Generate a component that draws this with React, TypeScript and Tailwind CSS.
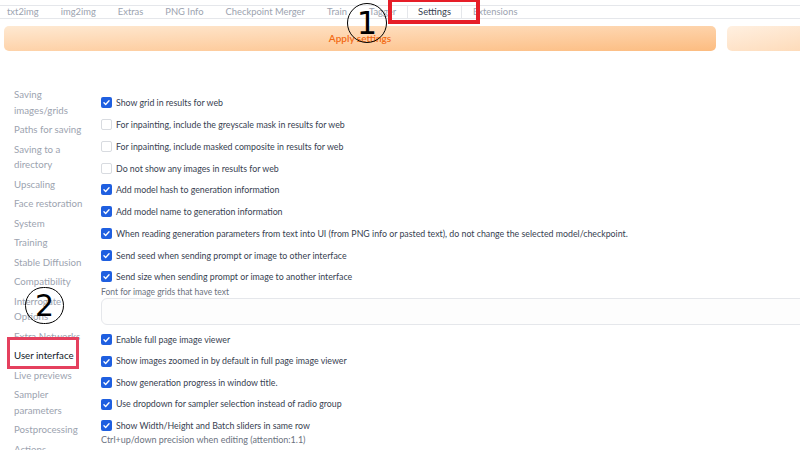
import React from "react";

const tabs = ["txt2img", "img2img", "Extras", "PNG Info", "Checkpoint Merger", "Train", "Tagger", "Settings", "Extensions"];

const side: { t: string; active?: boolean }[] = [
  { t: "Saving images/grids" },
  { t: "Paths for saving" },
  { t: "Saving to a directory" },
  { t: "Upscaling" },
  { t: "Face restoration" },
  { t: "System" },
  { t: "Training" },
  { t: "Stable Diffusion" },
  { t: "Compatibility" },
  { t: "Interrogate Options" },
  { t: "Extra Networks" },
  { t: "User interface", active: true },
  { t: "Live previews" },
  { t: "Sampler parameters" },
  { t: "Postprocessing" },
  { t: "Actions" },
];

const group1: [string, boolean][] = [
  ["Show grid in results for web", true],
  ["For inpainting, include the greyscale mask in results for web", false],
  ["For inpainting, include masked composite in results for web", false],
  ["Do not show any images in results for web", false],
  ["Add model hash to generation information", true],
  ["Add model name to generation information", true],
  ["When reading generation parameters from text into UI (from PNG info or pasted text), do not change the selected model/checkpoint.", true],
  ["Send seed when sending prompt or image to other interface", true],
  ["Send size when sending prompt or image to another interface", true],
];

const group2: [string, boolean][] = [
  ["Enable full page image viewer", true],
  ["Show images zoomed in by default in full page image viewer", true],
  ["Show generation progress in window title.", true],
  ["Use dropdown for sampler selection instead of radio group", true],
  ["Show Width/Height and Batch sliders in same row", true],
];

function Box({ on }: { on: boolean }) {
  if (on)
    return (
      <span className="w-[11px] h-[11px] rounded-[2px] bg-[#1f5fe0] flex items-center justify-center shrink-0">
        <svg width="9" height="9" viewBox="0 0 16 16">
          <path d="M3.5 8.5l3 3 6-6.5" fill="none" stroke="white" strokeWidth="2.4" strokeLinecap="round" strokeLinejoin="round" />
        </svg>
      </span>
    );
  return <span className="w-[11px] h-[11px] rounded-[2px] bg-white border border-[#d8dbe0] shrink-0" />;
}

function Row({ t, on, h }: { t: string; on: boolean; h: string }) {
  return (
    <div className={`flex items-center gap-[4px] ${h}`}>
      <Box on={on} />
      <span className="text-[8.8px] text-[#374151] whitespace-nowrap">{t}</span>
    </div>
  );
}

export default function App() {
  return (
    <div
      className="relative w-[800px] h-[450px] overflow-hidden bg-white"
      style={{ fontFamily: "Lato, 'Noto Sans', sans-serif" }}
    >
      {/* tabs */}
      <div className="mt-[5px] h-[14px] border-y border-[#e5e7eb] flex items-stretch ml-[-4px] text-[9.4px] leading-none">
        {tabs.map((t) => (
          <div
            key={t}
            className={
              t === "Settings"
                ? "px-[10px] flex items-center text-[#374151] border-x border-[#e5e7eb] bg-white"
                : "px-[11px] flex items-center text-[#9ca3af]"
            }
          >
            {t}
          </div>
        ))}
      </div>

      {/* buttons */}
      <div className="mt-[7px] flex gap-[11px] pl-[4px]">
        <div className="w-[712px] h-[25px] shrink-0 rounded-[5px] bg-linear-to-br from-[#fee9d2] to-[#fcbc80] flex items-center justify-center text-[10px] font-semibold text-[#f26a12]">
          Apply settings
        </div>
        <div className="w-[120px] h-[25px] shrink-0 rounded-[5px] bg-linear-to-br from-[#fff0e1] to-[#fdd6b0]" />
      </div>

      {/* main */}
      <div className="flex items-start">
        <div className="w-[101px] shrink-0 pl-[14px] pr-[12px] pt-[34px]">
          {side.map((s) => (
            <div
              key={s.t}
              className={`py-[2px] leading-[15.5px] text-[9.7px] ${s.active ? "text-[#111827]" : "text-[#9ca3af]"}`}
            >
              {s.t}
            </div>
          ))}
        </div>
        <div className="flex-1 pt-[41px] flex flex-col">
          {group1.map(([t, on]) => (
            <Row key={t} t={t} on={on} h="h-[21.75px]" />
          ))}
          <div className="text-[8.5px] leading-[10px] text-[#6b7280] mt-[-1px]">Font for image grids that have text</div>
          <div className="mt-[1px] h-[27px] w-[720px] rounded-[6px] border border-[#e5e7eb] bg-[#fdfdfd]" />
          <div className="mt-[4px] flex flex-col">
            {group2.map(([t, on]) => (
              <Row key={t} t={t} on={on} h="h-[21.5px]" />
            ))}
          </div>
          <div className="text-[9px] leading-[10px] text-[#6b7280] mt-[-1px]">Ctrl+up/down precision when editing (attention:1.1)</div>
        </div>
      </div>

      {/* annotations */}
      <div className="absolute left-[388px] top-[-2px] w-[92px] h-[26px] border-[4px] border-[#e61e28]" />
      <div className="absolute left-[7px] top-[337px] w-[72px] h-[32px] border-[3px] border-[#e5405e]" />
      <div className="absolute left-[347px] top-[3px] w-[40px] h-[40px] rounded-full border border-black flex items-center justify-center text-[32px] leading-none text-black" style={{ fontFamily: "'DejaVu Sans', sans-serif" }}>
        1
      </div>
      <div className="absolute left-[25px] top-[287px] w-[39px] h-[37px] rounded-full border border-black flex items-center justify-center text-[30px] leading-none text-black" style={{ fontFamily: "'DejaVu Sans', sans-serif" }}>
        2
      </div>
    </div>
  );
}
